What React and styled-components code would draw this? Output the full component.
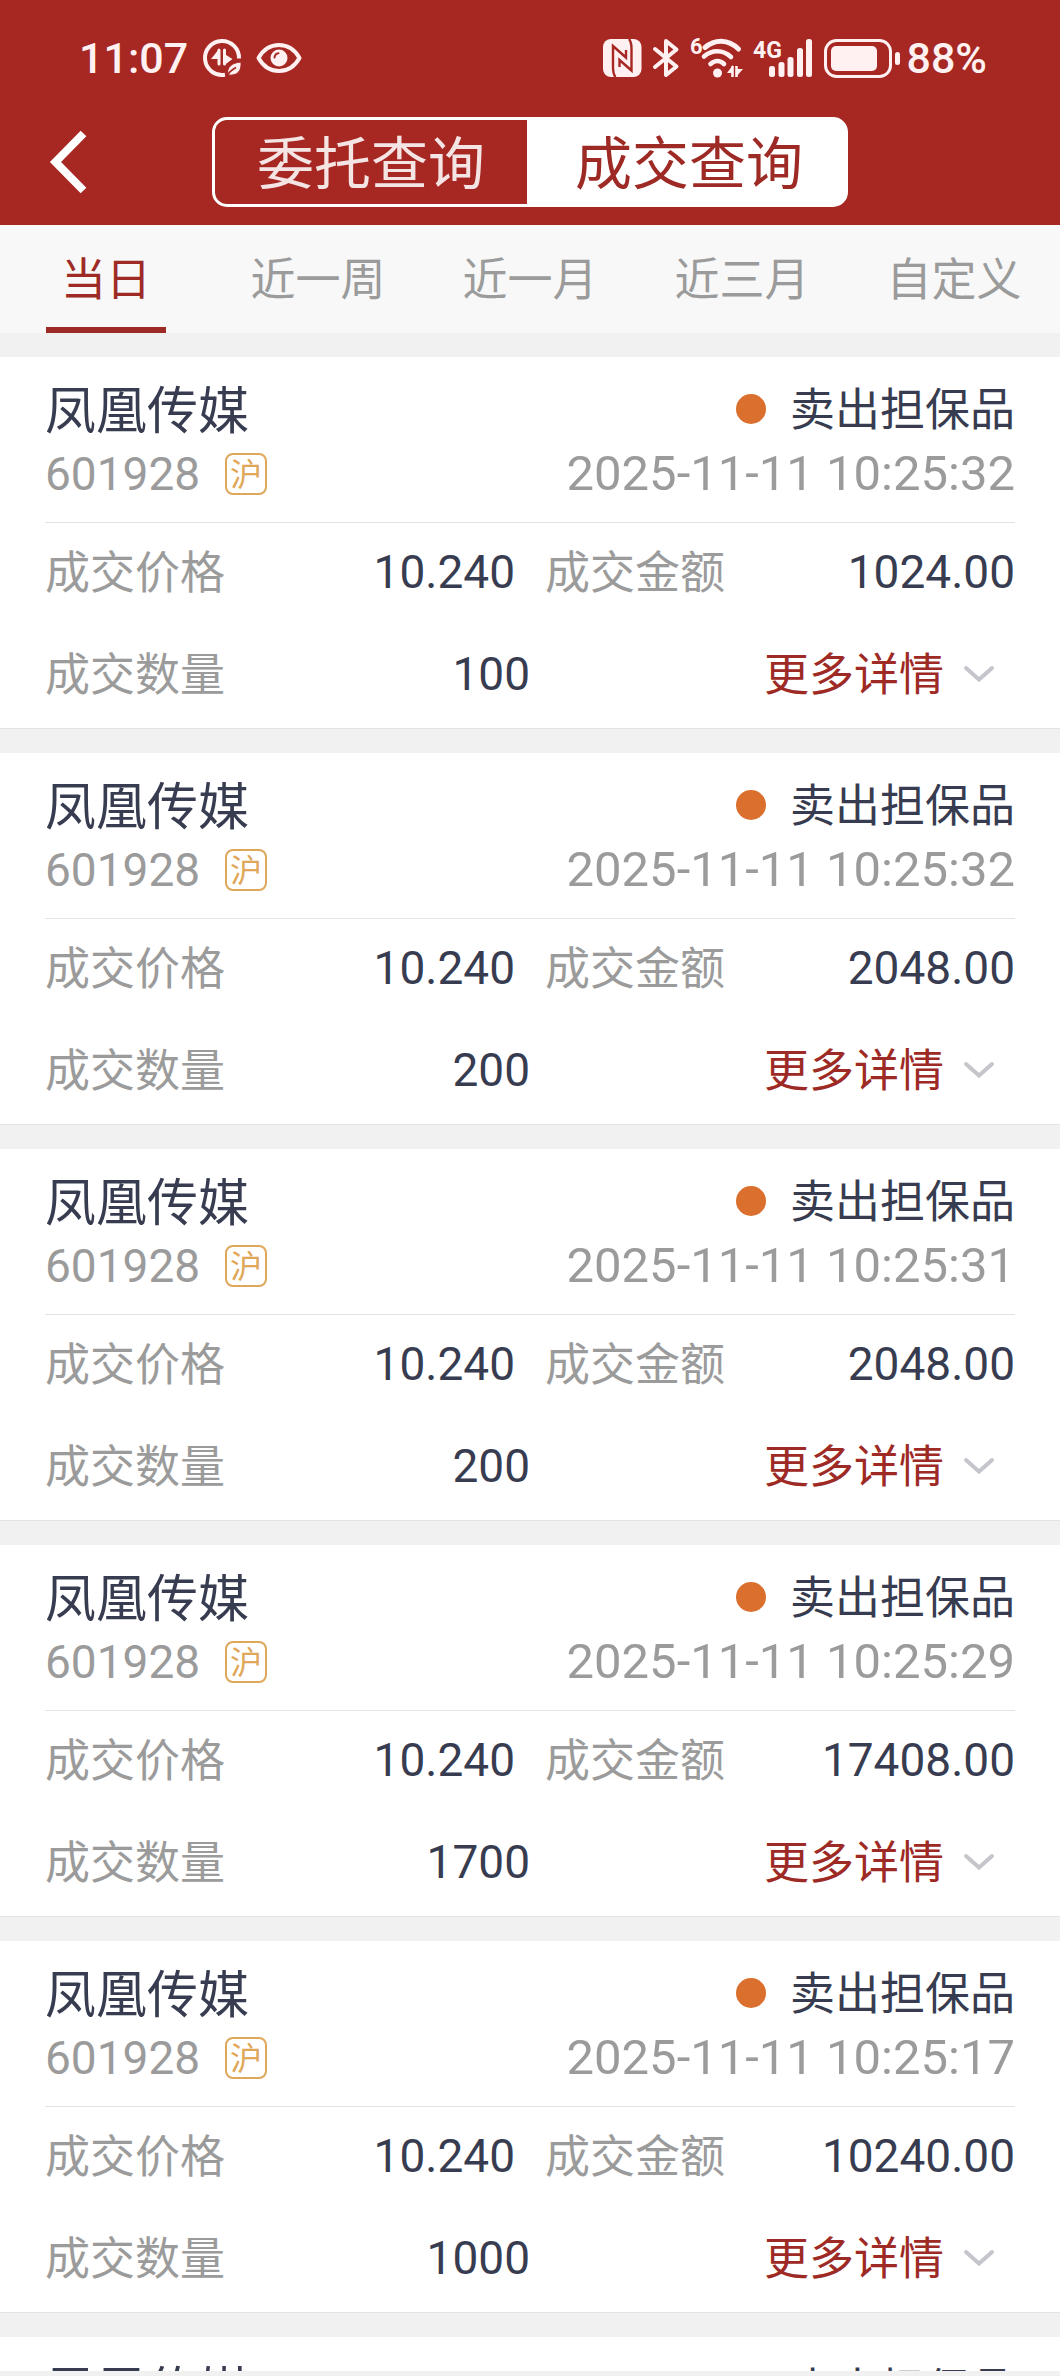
import React, { useState } from "react";
import styled, { createGlobalStyle } from "styled-components";

const red = "#a72722";
const ink = "#383c50";
const muted = "#9b9b9b";
const digits = `Roboto, "Noto Sans CJK SC", sans-serif`;

const GlobalStyle = createGlobalStyle`
  * { box-sizing: border-box; }
  body {
    margin: 0;
    background: #f1f1f1;
    font-family: "Noto Sans CJK SC", "Noto Sans", sans-serif;
  }
  button { border: 0; padding: 0; background: none; font: inherit; cursor: pointer; }
  svg { flex: none; overflow: visible; }
`;

const Screen = styled.div`
  display: flex;
  flex-direction: column;
  height: 100vh;
  padding-bottom: 5px;
`;

const Header = styled.header`
  flex: none;
  background: ${red};
`;

const StatusBar = styled.div`
  display: flex;
  align-items: center;
  justify-content: space-between;
  height: 99px;
  padding: 17px 73px 0 79px;
  color: #fff1f1;
  font-family: Roboto, sans-serif;
  font-size: 43px;
  font-weight: 500;
  line-height: 52px;
`;

const StatusGroup = styled.div`
  display: flex;
  align-items: center;
  gap: ${(p) => p.$gap}px;
`;

const Nav = styled.div`
  display: grid;
  grid-template-columns: 1fr 3fr 1fr;
  align-items: center;
  height: 126px;
`;

const BackButton = styled.button`
  display: flex;
  padding-left: 48px;
`;

const Segmented = styled.div`
  display: grid;
  grid-template-columns: 1fr 1fr;
  gap: 6px;
  height: 90px;
  border: 3px solid #fff;
  border-radius: 15px;
  background: #fff;
`;

const Segment = styled.button`
  padding-bottom: 6px;
  font-size: 57px;
  line-height: 78px;
  color: ${(p) => (p.$active ? "#9e2a26" : "#f4e4e4")};
  background: ${(p) => (p.$active ? "#fff" : red)};
  border-radius: ${(p) => (p.$active ? "0 12px 12px 0" : "12px 0 0 12px")};
`;

const Tabs = styled.nav`
  flex: none;
  display: grid;
  grid-template-columns: repeat(5, 1fr);
  background: #f8f8f8;
`;

const Tab = styled.button`
  display: flex;
  justify-content: center;
  font-size: 45px;
  line-height: 104px;
  color: ${(p) => (p.$active ? "#9e2a26" : muted)};
`;

const TabLabel = styled.span`
  min-width: 120px;
  padding-bottom: 4px;
  white-space: nowrap;
  box-shadow: ${(p) => (p.$active ? "inset 0 -6px 0 #9e2a26" : "none")};
`;

const List = styled.main`
  flex: 1;
  min-height: 0;
  overflow: auto;
  scrollbar-width: none;
  display: flex;
  flex-direction: column;
  gap: 24px;
  padding-top: 24px;
`;

const Card = styled.article`
  flex: none;
  background: #fff;
  border-bottom: 1px solid #e3e3e3;
`;

const CardHead = styled.div`
  margin: 0 45px;
  padding: 20px 0 17px;
  border-bottom: 1px solid #e3e3e3;
`;

const HeadRow = styled.div`
  display: flex;
  align-items: center;
  justify-content: space-between;
  height: 64px;
  padding-top: ${(p) => (p.$muted ? "2px" : "0")};
  line-height: 60px;
  color: ${(p) => (p.$muted ? muted : ink)};
`;

const Name = styled.h2`
  margin: 0;
  padding-bottom: 4px;
  font-size: 51px;
  font-weight: 400;
`;

const Side = styled.span`
  display: flex;
  align-items: center;
  gap: 24px;
`;

const SideLabel = styled.span`
  padding-bottom: 4px;
  font-size: 45px;
`;

const Dot = styled.i`
  width: 30px;
  height: 30px;
  border-radius: 50%;
  background: #db6f2d;
`;

const Code = styled.span`
  display: flex;
  align-items: center;
  gap: 25px;
  font-family: ${digits};
  font-size: 46px;
`;

const Market = styled.span`
  width: 42px;
  height: 42px;
  border: 2px solid #dfa75a;
  border-radius: 8px;
  color: #dfa75a;
  font-family: "Noto Sans CJK SC", sans-serif;
  font-size: 32px;
  line-height: 34px;
  text-align: center;
`;

const Time = styled.time`
  font-family: ${digits};
  font-size: 49px;
`;

const CardBody = styled.div`
  display: flex;
  flex-direction: column;
  gap: 4px;
  padding: 0 45px 5px;
`;

const BodyRow = styled.div`
  display: grid;
  grid-template-columns: 1fr 1fr;
  column-gap: ${(p) => (p.$gap ? "30px" : "0")};
  height: 98px;
`;

const Field = styled.div`
  display: flex;
  justify-content: space-between;
`;

const FieldLabel = styled.span`
  font-size: 45px;
  line-height: 94px;
  color: ${muted};
`;

const FieldValue = styled.span`
  font-family: ${digits};
  font-size: 46px;
  line-height: 98px;
  color: ${ink};
`;

const MoreButton = styled.button`
  display: flex;
  align-items: center;
  justify-content: flex-end;
  gap: 20px;
  padding-right: 21px;
  color: #9e2a26;
`;

const MoreLabel = styled.span`
  padding-bottom: 4px;
  font-size: 45px;
  line-height: 94px;
`;

const DataSaverIcon = () => (
  <svg width="40" height="40" viewBox="0 0 40 40" fill="none" stroke="currentColor">
    <path d="M37 20.500A17 17 0 1 0 23 36.700" strokeWidth="4" />
    <path d="M17 12v14M22.500 12v14" strokeWidth="3" strokeLinecap="round" />
    <path d="M17 11v10H9zM22.500 27v-11l8 5z" fill="currentColor" stroke="none" />
    <path d="M39 24c.8 9-3.500 14-13 13-2-7.500 4-12.500 13-13z" fill="currentColor" stroke={red} strokeWidth="1" />
    <path d="M24 39c2.500-4 5-7 10-9.500" stroke={red} strokeWidth="1.600" />
  </svg>
);

const EyeIcon = () => (
  <svg width="46" height="32" viewBox="0 0 46 32" fill="none" stroke="currentColor">
    <path d="M2.500 16C7 8 14 3 23 3s16 5 20.500 13C39 24 32 29 23 29S7 24 2.500 16z" strokeWidth="4" strokeLinejoin="round" />
    <circle cx="23" cy="16" r="8.500" fill="currentColor" stroke="none" />
    <path d="M18.500 15.500c.3-2.500 1.800-4 4-4.300" stroke={red} strokeWidth="2" strokeLinecap="round" />
  </svg>
);

const NfcIcon = () => (
  <svg width="39" height="38" viewBox="0 0 39 38" fill="none">
    <rect width="38.500" height="38" rx="8" fill="currentColor" />
    <path d="M12.500 38C10 35 10 32 10 28V7l13 11.500V11" stroke={red} strokeWidth="2.400" />
    <path d="M26 0C28.500 3 28.500 6 28.500 10v21.500L16.500 21v7" stroke={red} strokeWidth="2.400" />
  </svg>
);

const BluetoothIcon = () => (
  <svg width="26" height="38" viewBox="0 0 26 38" fill="none" stroke="currentColor" strokeWidth="4" strokeLinecap="round" strokeLinejoin="round">
    <path d="M2 10l21.500 17.500L13 36V2l10.500 8.500L2 28" />
  </svg>
);

const WifiIcon = () => (
  <svg width="54" height="42" viewBox="0 0 54 42" fill="none" stroke="currentColor">
    <text x="0" y="17" fill="currentColor" stroke="none" fontSize="22" fontWeight="700">6</text>
    <path d="M15 10.500C25 2 38 2 48.500 12" strokeWidth="5" strokeLinecap="round" />
    <path d="M14 19.500C22 12.500 33 12.500 41 20" strokeWidth="4.600" strokeLinecap="round" />
    <path d="M20.500 27C25 23 30 23 34 27" strokeWidth="4.600" strokeLinecap="round" />
    <circle cx="27.500" cy="36" r="4.500" fill="currentColor" stroke="none" />
    <path d="M42.500 29v11M46.500 29v11" strokeWidth="2.600" />
    <path d="M43 28v8h-6zM46 40v-8h7z" fill="currentColor" stroke="none" />
  </svg>
);

const SignalIcon = () => (
  <svg width="58" height="42" viewBox="0 0 58 42" fill="currentColor">
    <text x="-2" y="21" fontSize="23" fontWeight="700">4G</text>
    <rect x="14" y="29" width="6" height="11" rx="2.500" />
    <rect x="23.500" y="25" width="6" height="15" rx="2.500" />
    <rect x="32.500" y="20" width="6" height="20" rx="2.500" />
    <rect x="42" y="11" width="6" height="29" rx="2.500" />
    <rect x="51" y="2" width="6" height="38" rx="2.500" />
  </svg>
);

const BatteryIcon = () => (
  <svg width="77" height="39" viewBox="0 0 77 39" fill="none">
    <rect x="1.500" y="1.500" width="65" height="36" rx="11" stroke="currentColor" strokeWidth="3" />
    <rect x="7" y="7" width="46" height="25" rx="5" fill="currentColor" />
    <rect x="71" y="13" width="5" height="13" rx="2.500" fill="currentColor" />
  </svg>
);

const BackIcon = () => (
  <svg width="40" height="64" viewBox="0 0 40 64" fill="none" stroke="#fff" strokeWidth="8">
    <path d="M35.500 3.500L7.500 32l28 28.500" />
  </svg>
);

const ChevronIcon = () => (
  <svg width="30" height="16" viewBox="0 0 30 16" fill="none" stroke="#c5c6cc" strokeWidth="4" strokeLinecap="round">
    <path d="M2 2l13 11.500L28 2" />
  </svg>
);

const tabs = ["当日", "近一周", "近一月", "近三月", "自定义"];

const trades = [
  { time: "2025-11-11 10:25:32", price: "10.240", amount: "1024.00", quantity: "100" },
  { time: "2025-11-11 10:25:32", price: "10.240", amount: "2048.00", quantity: "200" },
  { time: "2025-11-11 10:25:31", price: "10.240", amount: "2048.00", quantity: "200" },
  { time: "2025-11-11 10:25:29", price: "10.240", amount: "17408.00", quantity: "1700" },
  { time: "2025-11-11 10:25:17", price: "10.240", amount: "10240.00", quantity: "1000" },
  {},
];

function TradeCard({ trade }) {
  return (
    <Card>
      <CardHead>
        <HeadRow>
          <Name>凤凰传媒</Name>
          <Side>
            <Dot />
            <SideLabel>卖出担保品</SideLabel>
          </Side>
        </HeadRow>
        {trade.time && (
          <HeadRow $muted>
            <Code>601928<Market>沪</Market></Code>
            <Time>{trade.time}</Time>
          </HeadRow>
        )}
      </CardHead>
      {trade.price && (
        <CardBody>
          <BodyRow $gap>
            <Field>
              <FieldLabel>成交价格</FieldLabel>
              <FieldValue>{trade.price}</FieldValue>
            </Field>
            <Field>
              <FieldLabel>成交金额</FieldLabel>
              <FieldValue>{trade.amount}</FieldValue>
            </Field>
          </BodyRow>
          <BodyRow>
            <Field>
              <FieldLabel>成交数量</FieldLabel>
              <FieldValue>{trade.quantity}</FieldValue>
            </Field>
            <MoreButton>
              <MoreLabel>更多详情</MoreLabel>
              <ChevronIcon />
            </MoreButton>
          </BodyRow>
        </CardBody>
      )}
    </Card>
  );
}

export default function App() {
  const [mode, setMode] = useState("成交查询");
  const [range, setRange] = useState("当日");

  return (
    <Screen>
      <GlobalStyle />
      <Header>
        <StatusBar>
          <StatusGroup $gap={14}>
            <span>11:07</span>
            <DataSaverIcon />
            <EyeIcon />
          </StatusGroup>
          <StatusGroup $gap={11}>
            <NfcIcon />
            <BluetoothIcon />
            <WifiIcon />
            <SignalIcon />
            <StatusGroup $gap={5}>
              <BatteryIcon />
              <span>88%</span>
            </StatusGroup>
          </StatusGroup>
        </StatusBar>
        <Nav>
          <BackButton aria-label="返回"><BackIcon /></BackButton>
          <Segmented>
            {["委托查询", "成交查询"].map((label) => (
              <Segment key={label} $active={mode === label} onClick={() => setMode(label)}>
                {label}
              </Segment>
            ))}
          </Segmented>
        </Nav>
      </Header>
      <Tabs>
        {tabs.map((label) => (
          <Tab key={label} $active={range === label} onClick={() => setRange(label)}>
            <TabLabel $active={range === label}>{label}</TabLabel>
          </Tab>
        ))}
      </Tabs>
      <List>
        {trades.map((trade, i) => (
          <TradeCard key={i} trade={trade} />
        ))}
      </List>
    </Screen>
  );
}
